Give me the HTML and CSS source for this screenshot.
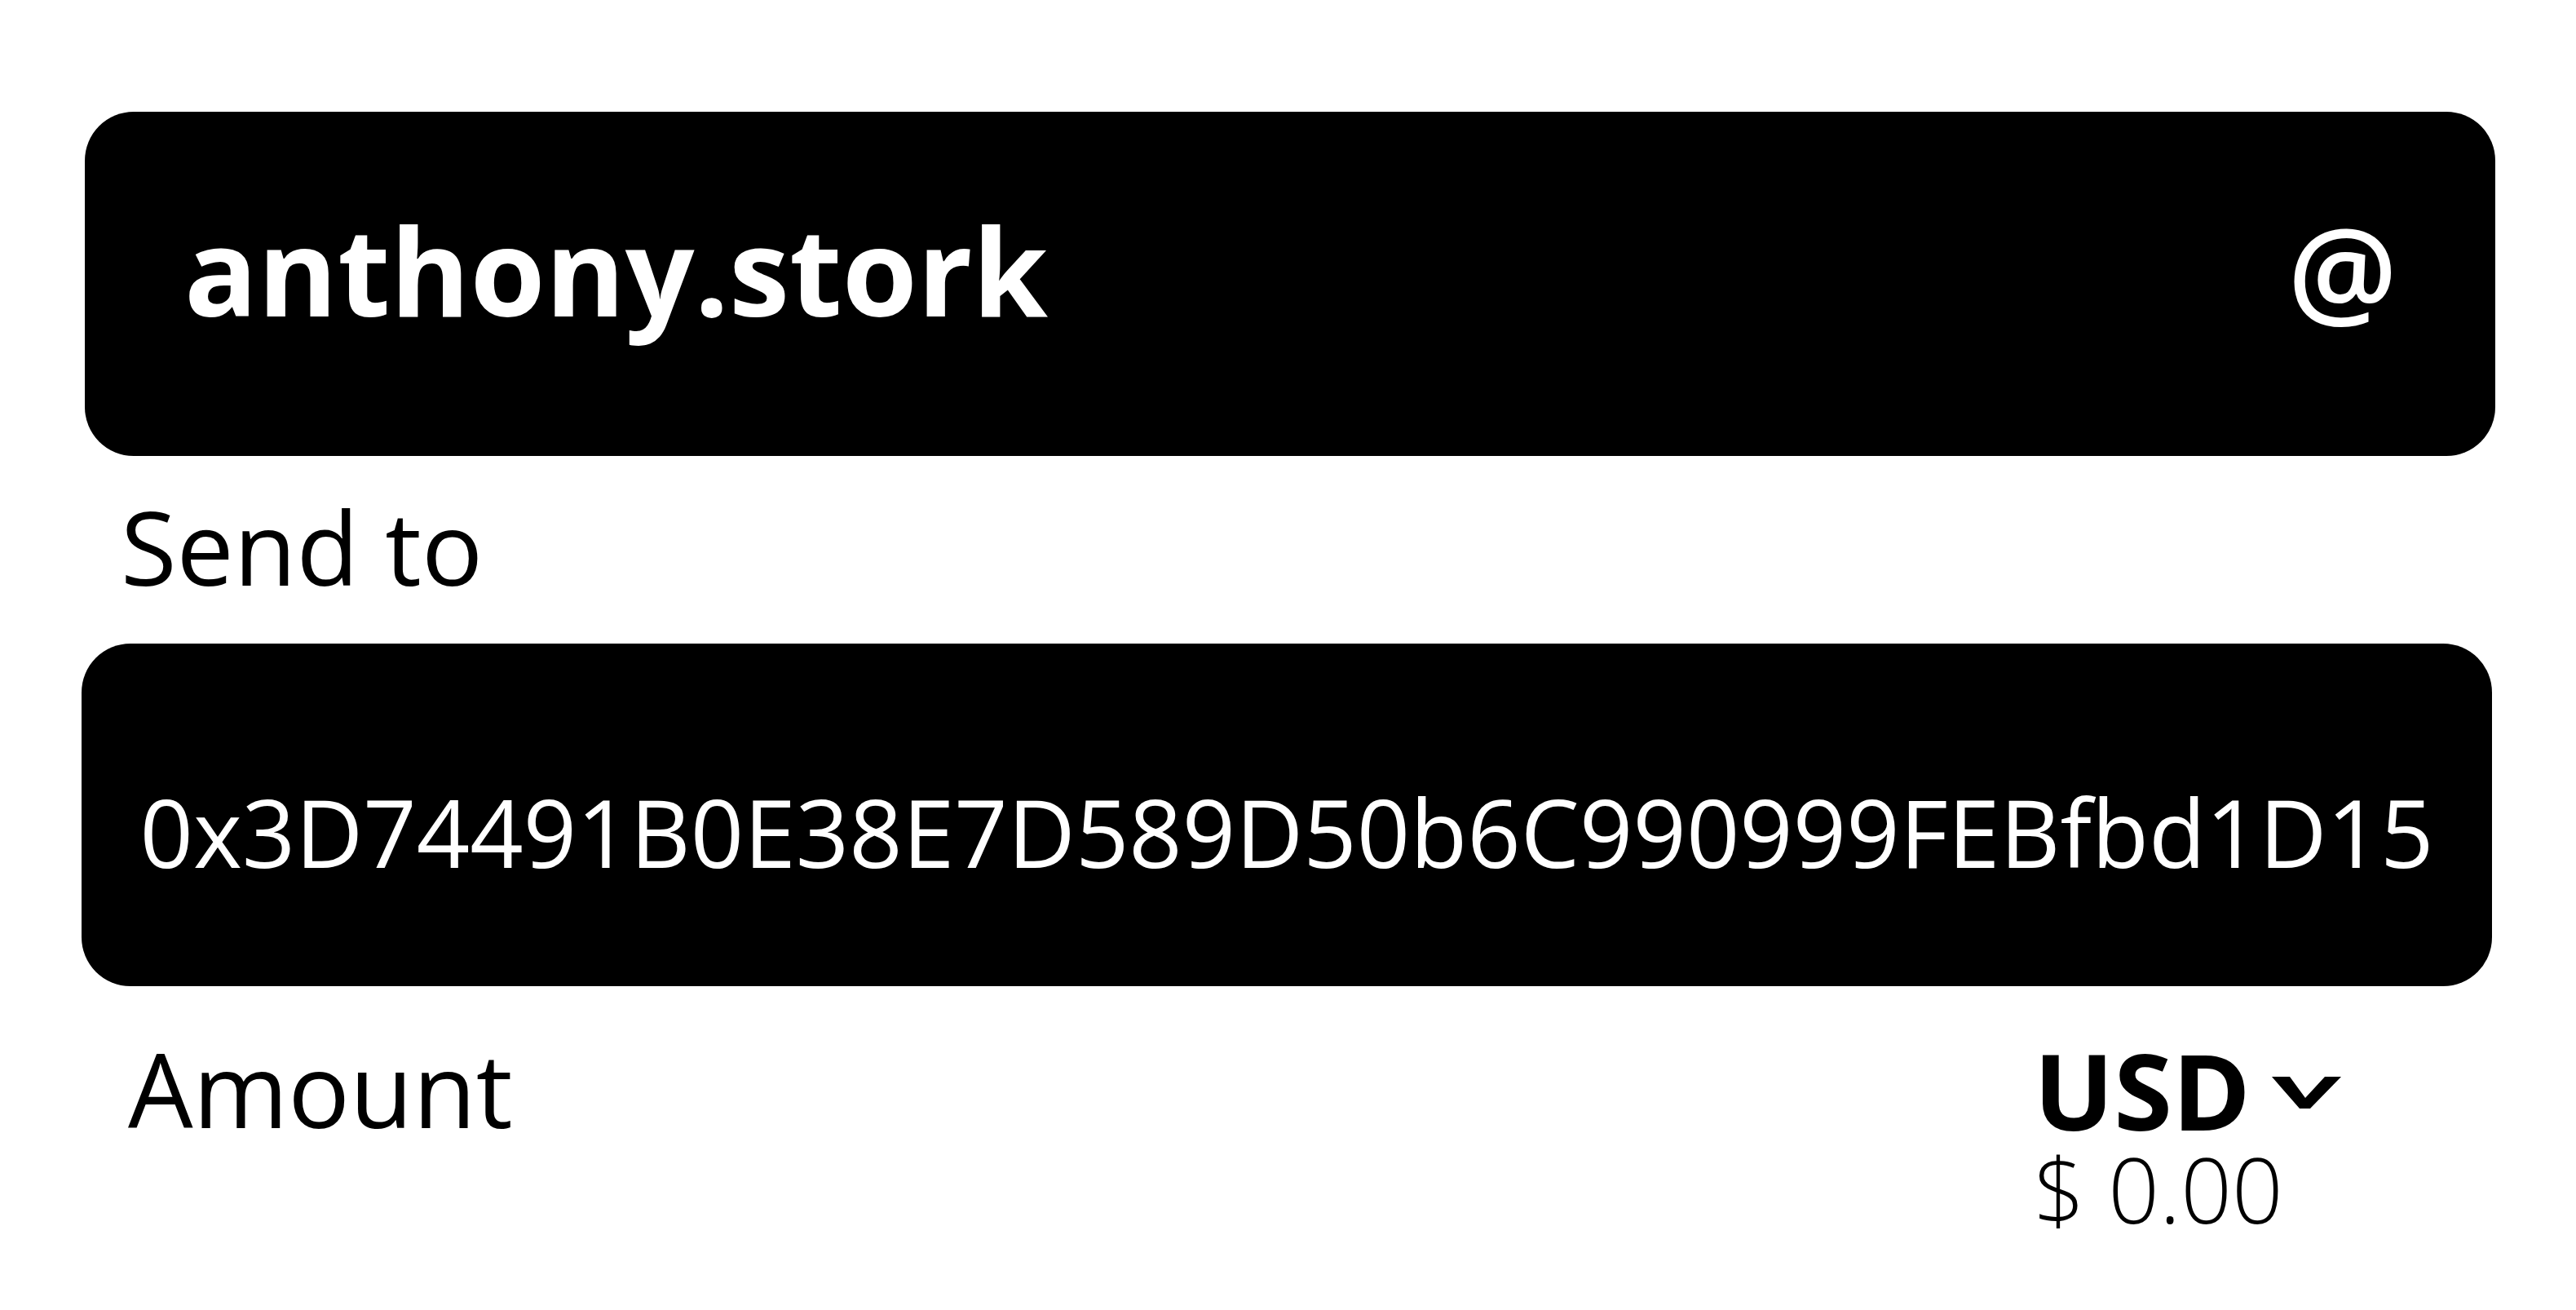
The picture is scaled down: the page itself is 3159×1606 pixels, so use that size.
FILE: index.html
```html
<!DOCTYPE html>
<html lang="en">
<head>
    <meta charset="UTF-8">
    <meta name="viewport" content="width=device-width, initial-scale=1.0">
    <title>Send</title>
    <link rel="stylesheet" href="styles.css">
</head>
<body>

<div class="container">
    <!-- Cuenta de origen -->
    <div class="field field-name">
        <span class="username">anthony.stork</span>
        <span class="at">@</span>
    </div>

    <p class="label">Send to</p>

    <div class="field field-address">
        <span class="address">0x3D74491B0E38E7D589D50b6C990999FEBfbd1D15</span>
    </div>

    <div class="amount-row">
        <p class="label label-amount">Amount</p>
        <div class="currency">
            <div class="currency-select">
                <span class="currency-code">USD</span>
                <svg class="chevron" width="85" height="39" viewBox="0 0 85 39">
                    <polygon points="0,0 22,0 41,26 65,0 85,0 47,39 34,39" fill="#000"/>
                </svg>
            </div>
            <div class="currency-value">$ 0.00</div>
        </div>
    </div>
</div>

</body>
</html>
```

FILE: styles.css
```css
body {
    font-family: "Open Sans", sans-serif;
    margin: 0;
    padding: 0;
    background-color: #fff;
    color: #000;
}
.container {
    padding: 137px 103px 0 100px;
}
.field {
    background-color: #000;
    color: #fff;
    border-radius: 60px;
}
.field-name {
    display: flex;
    justify-content: space-between;
    align-items: baseline;
    margin: 0 -4px 0 4px;
    padding: 118px 120px 153px 122px;
    font-size: 149px;
    line-height: 150px;
}
.username {
    font-weight: 700;
}
.at {
    font-size: 150px;
    font-weight: 600;
}
.label {
    margin: 36px 0 44px 48px;
    font-size: 125px;
    line-height: 150px;
}
.field-address {
    padding: 174px 0 131px;
    text-align: center;
    font-size: 114.5px;
    line-height: 115px;
}
.amount-row {
    display: flex;
    justify-content: space-between;
    align-items: flex-start;
    margin-top: 50px;
}
.label-amount {
    margin: 0 0 0 57px;
    font-size: 126px;
}
.currency {
    padding-top: 17px;
    margin-right: 185px;
}
.currency-select {
    display: flex;
    align-items: center;
    font-size: 130px;
    line-height: 120px;
    font-weight: 700;
}
.chevron {
    margin-left: 26px;
    margin-top: 6px;
}
.currency-value {
    margin-top: 11px;
    font-size: 110px;
    line-height: 100px;
    font-weight: 300;
}
```
